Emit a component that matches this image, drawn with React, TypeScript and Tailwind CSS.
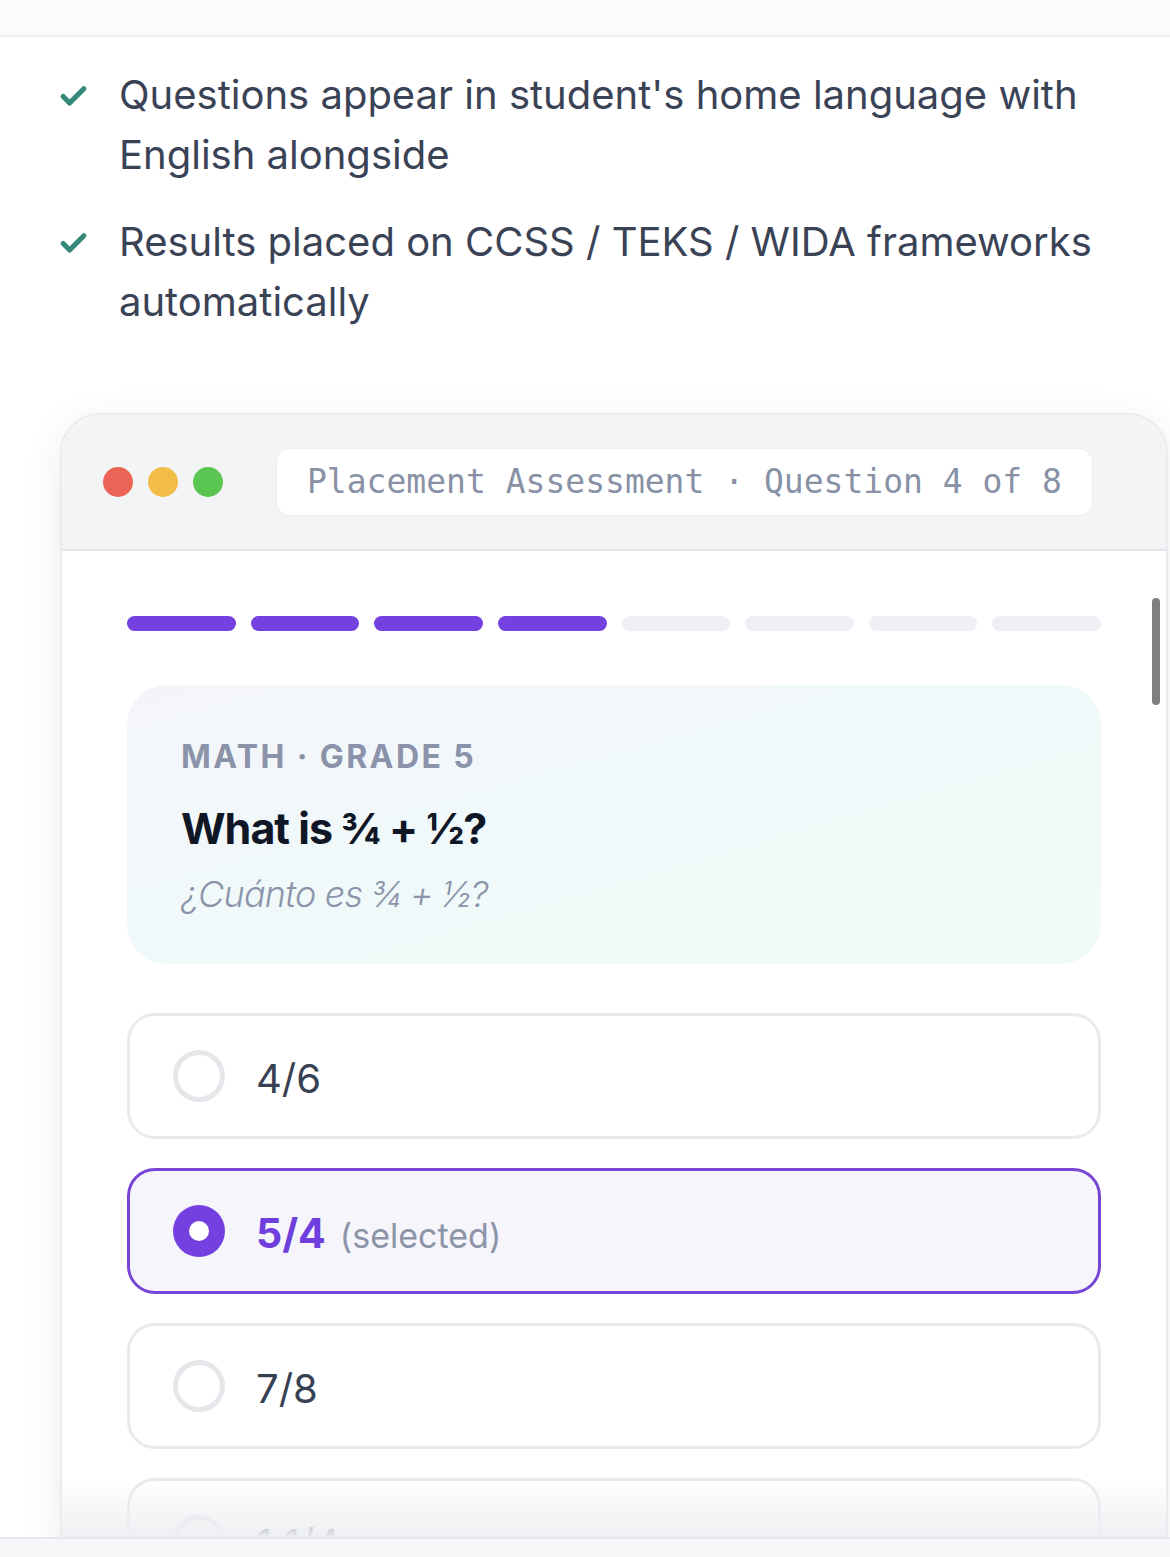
import { Check } from "lucide-react";

// 체크리스트 항목
const POINTS = [
  "Questions appear in student's home language with English alongside",
  "Results placed on CCSS / TEKS / WIDA frameworks automatically",
];

const OPTIONS = [
  { label: "4/6", selected: false },
  { label: "5/4", selected: true },
  { label: "7/8", selected: false },
  { label: "1 1/4", selected: false },
];

function Radio({ on }: { on: boolean }) {
  return on ? (
    <div className="flex h-[52px] w-[52px] shrink-0 items-center justify-center rounded-full bg-[#7440e0]">
      <div className="h-[20px] w-[20px] rounded-full bg-white" />
    </div>
  ) : (
    <div className="h-[52px] w-[52px] shrink-0 rounded-full border-[5px] border-[#e5e7eb] bg-white" />
  );
}

export default function App() {
  return (
    <div className="relative h-[1557px] w-[1170px] overflow-hidden bg-white font-['Inter',sans-serif]">
      {/* 상단 바 */}
      <div className="h-[37px] border-b-[2px] border-[#eceef1] bg-[#fafbfc]" />

      {/* 체크리스트 */}
      <ul className="mt-[28px] flex flex-col gap-[27px] pl-[58px] pr-[60px]">
        {POINTS.map((p) => (
          <li key={p} className="flex gap-[30px]">
            <Check className="mt-[16px] h-[31px] w-[31px] shrink-0 text-[#34897a]" strokeWidth={4} />
            <span className="text-[40px] leading-[60px] tracking-[0px] text-[#3a4255]">{p}</span>
          </li>
        ))}
      </ul>

      {/* 브라우저 창 */}
      <div className="ml-[60px] mt-[81px] w-[1108px] overflow-hidden rounded-t-[40px] border-2 border-[#e9ebee] shadow-[0_10px_40px_rgba(15,23,42,0.08)]">
        <div className="flex h-[136px] items-center border-b-2 border-[#e4e6ea] bg-[#f3f4f6] pl-[41px]">
          <div className="flex gap-[15px]">
            <span className="h-[30px] w-[30px] rounded-full bg-[#ec6455]" />
            <span className="h-[30px] w-[30px] rounded-full bg-[#f2bc48]" />
            <span className="h-[30px] w-[30px] rounded-full bg-[#5bc551]" />
          </div>
          <div className="ml-[53px] flex h-[68px] items-center rounded-[14px] border border-[#eceef1] bg-white px-[30px] font-['DejaVu_Sans_Mono',monospace] text-[33px] text-[#8891a5]">
            Placement Assessment · Question 4 of 8
          </div>
        </div>

        <div className="relative h-[988px] bg-white px-[65px] pt-[65px]">
          {/* 스크롤바 */}
          <div className="absolute right-[6px] top-[47px] h-[107px] w-[8px] rounded-full bg-[#7f7f7f]" />

          {/* 진행 표시 */}
          <div className="grid grid-cols-8 gap-[15px]">
            {Array.from({ length: 8 }).map((_, i) => (
              <div key={i} className={`h-[15px] rounded-full ${i < 4 ? "bg-[#7440e0]" : "bg-[#eef0f5]"}`} />
            ))}
          </div>

          {/* 문제 카드 */}
          <div className="mt-[54px] h-[279px] rounded-[40px] bg-gradient-to-br from-[#f4f5fa] via-[#f0f9fa] to-[#effcf5] px-[54px] pt-[52px]">
            <div className="text-[32px] font-bold leading-[40px] tracking-[2.4px] text-[#8b93aa]">MATH · GRADE 5</div>
            <div className="mt-[24px] text-[43px] font-bold leading-[54px] tracking-[-1px] text-[#0f1626]">What is ¾ + ½?</div>
            <div className="mt-[14px] text-[36px] font-light italic leading-[50px] tracking-[-0.8px] text-[#8c94aa]">¿Cuánto es ¾ + ½?</div>
          </div>

          {/* 선택지 */}
          <div className="mt-[49px] flex flex-col gap-[29px]">
            {OPTIONS.map((o) => (
              <div
                key={o.label}
                className={`flex h-[126px] items-center gap-[31px] rounded-[28px] border-[3px] px-[43px] ${
                  o.selected ? "border-[#7846d6] bg-[#f5f5fb]" : "border-[#e9eaee] bg-white"
                }`}
              >
                <Radio on={o.selected} />
                {o.selected ? (
                  <span className="flex items-baseline gap-[14px] pt-[6px]">
                    <span className="text-[41px] font-bold text-[#6e3fdc]">{o.label}</span>
                    <span className="text-[34px] text-[#8c94a7]">(selected)</span>
                  </span>
                ) : (
                  <span className="pt-[6px] text-[40px] text-[#374152]">{o.label}</span>
                )}
              </div>
            ))}
          </div>

          {/* 하단 페이드 */}
          <div className="pointer-events-none absolute bottom-0 left-0 right-0 h-[60px] bg-gradient-to-b from-white/0 to-[#eeeff2]" />
        </div>
      </div>

      {/* 하단 바 */}
      <div className="absolute bottom-0 left-0 right-0 h-[20px] border-t-2 border-[#e6e8ee] bg-[#f6f7f9]" />
    </div>
  );
}
